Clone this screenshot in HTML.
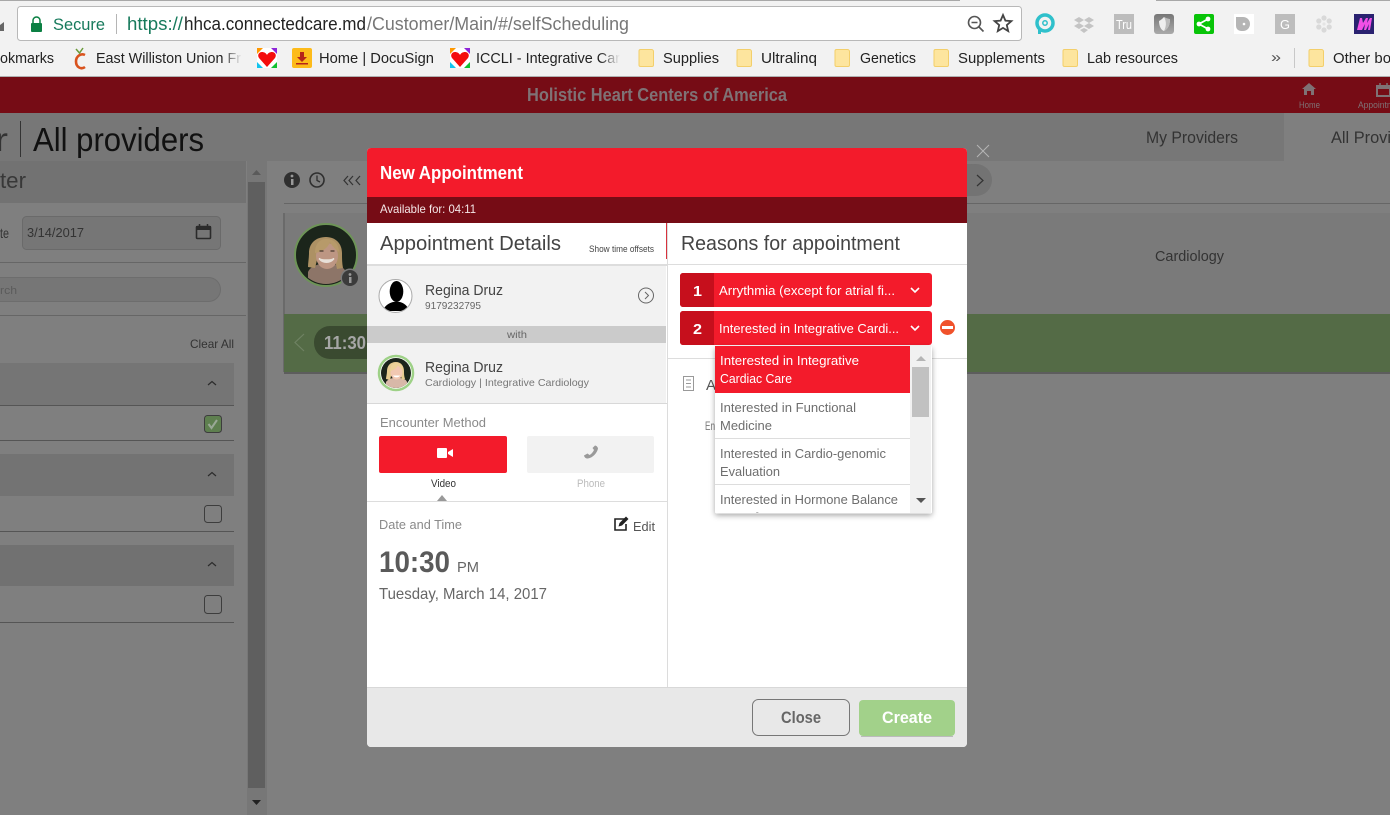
<!DOCTYPE html>
<html><head><meta charset="utf-8"><title>New Appointment</title>
<style>
html,body{margin:0;padding:0;width:1390px;height:815px;overflow:hidden;background:#7f7f7f}
svg{display:block}
text{font-family:"Liberation Sans",sans-serif;white-space:pre}
</style></head><body>
<svg width="1390" height="815" viewBox="0 0 1390 815" xmlns="http://www.w3.org/2000/svg">
<defs>
<filter id="sh" x="-20%" y="-20%" width="140%" height="140%"><feDropShadow dx="0" dy="2" stdDeviation="3" flood-color="#000" flood-opacity=".35"/></filter>
<linearGradient id="f1" x1="0" x2="1"><stop offset="0" stop-color="#f2f2f2" stop-opacity="0"/><stop offset="1" stop-color="#f2f2f2"/></linearGradient>
<linearGradient id="g4" x1="0" x2="0" y1="0" y2="1"><stop offset="0" stop-color="#777"/><stop offset="1" stop-color="#aaa"/></linearGradient>
<clipPath id="pc1"><circle cx="326" cy="255" r="29"/></clipPath>
<clipPath id="pc2"><circle cx="396" cy="373" r="15"/></clipPath>
<clipPath id="pc3"><circle cx="395.500" cy="296" r="16"/></clipPath>
<clipPath id="dd"><rect x="715" y="346" width="196" height="167"/></clipPath>
</defs>

<!-- browser chrome -->
<rect width="1390" height="77" fill="#f2f2f2"/>
<rect x="0" y="0" width="960" height="1" fill="#a8a8a8"/>
<rect x="1156" y="0" width="234" height="1" fill="#a8a8a8"/>
<path d="M0 25l4-3v9H0z" fill="#666"/>
<rect x="17.500" y="6.500" width="1004" height="34" rx="3" fill="#fff" stroke="#b8b8b8"/>
<rect x="31" y="23" width="11" height="9" rx="1" fill="#0b8043"/>
<path d="M33 23v-2.500a3.500 3.500 0 0 1 7 0V23" fill="none" stroke="#0b8043" stroke-width="1.500"/>
<text x="53" y="30" font-size="17" fill="#177a5c" textLength="52" lengthAdjust="spacingAndGlyphs">Secure</text>
<rect x="116" y="14" width="1" height="20" fill="#b5b5b5"/>
<text x="127" y="30" font-size="18" fill="#177a5c" textLength="56" lengthAdjust="spacingAndGlyphs">https://</text>
<text x="184" y="30" font-size="18" fill="#222" textLength="182" lengthAdjust="spacingAndGlyphs">hhca.connectedcare.md</text>
<text x="367" y="30" font-size="18" fill="#777" textLength="262" lengthAdjust="spacingAndGlyphs">/Customer/Main/#/selfScheduling</text>
<!-- zoom + star -->
<circle cx="974.500" cy="22.500" r="6" fill="none" stroke="#555" stroke-width="1.600"/>
<path d="M971.500 22.500h6M979 27l4.500 4.500" stroke="#555" stroke-width="1.600" fill="none"/>
<path d="M1003 15l2.400 5.600 6 .5-4.600 4 1.400 6-5.200-3.200-5.200 3.200 1.400-6-4.600-4 6-.5z" fill="none" stroke="#444" stroke-width="1.800"/>
<!-- extensions -->
<circle cx="1045" cy="23" r="8" fill="none" stroke="#2fc0cb" stroke-width="3.500"/><circle cx="1045" cy="23" r="2.200" fill="none" stroke="#2fc0cb" stroke-width="1.500"/><path d="M1039.500 29v5" stroke="#2fc0cb" stroke-width="3"/>
<path d="M1079 17l5 3-5 3-5-3zM1089 17l5 3-5 3-5-3zM1079 23l5 3-5 3-5-3zM1089 23l5 3-5 3-5-3zM1084 28l4 2-4 3-4-3z" fill="#c4c4c4"/>
<rect x="1114" y="14" width="20" height="20" fill="#bdbdbd"/><text x="1116" y="29" font-size="13" fill="#fff" textLength="16" lengthAdjust="spacingAndGlyphs">Tru</text>
<rect x="1154" y="14" width="20" height="20" rx="3" fill="url(#g4)"/><path d="M1164 17c3 2 5 2 6 2 0 6-2 10-6 12-3-1-5-5-5-10 2-1 3-2 5-4z" fill="#eee"/><path d="M1164 17c3 2 5 2 6 2 0 6-2 10-6 12 2-4 3-9 0-14z" fill="#bbb"/>
<rect x="1194" y="14" width="20" height="20" rx="2" fill="#08c408"/><circle cx="1199" cy="24" r="2.400" fill="#fff"/><circle cx="1208" cy="19" r="2.400" fill="#fff"/><circle cx="1208" cy="29" r="2.400" fill="#fff"/><path d="M1199 24l9-5M1199 24l9 5" stroke="#fff" stroke-width="1.800"/>
<rect x="1234" y="14" width="20" height="20" fill="#fff"/><path d="M1236 17h7a7 7 0 0 1 0 14h-2a5 5 0 0 1-5-5z" fill="#b5b5b5"/><circle cx="1244" cy="24" r="1.300" fill="#fff"/>
<rect x="1275" y="14" width="20" height="20" fill="#bdbdbd"/><text x="1280" y="29" font-size="13" fill="#fff" textLength="10" lengthAdjust="spacingAndGlyphs">G</text>
<g fill="#d9d9d9"><circle cx="1324" cy="18" r="2.600"/><circle cx="1324" cy="30" r="2.600"/><circle cx="1318.800" cy="21" r="2.600"/><circle cx="1329.200" cy="21" r="2.600"/><circle cx="1318.800" cy="27" r="2.600"/><circle cx="1329.200" cy="27" r="2.600"/></g><circle cx="1324" cy="24" r="1.600" fill="#e4e4e4"/>
<rect x="1354" y="14" width="20" height="20" fill="#2a2270"/><path d="M1357 30l3-12h2l1 5 3-5h2l-1 5 3-5h2l-2 12h-2l1-6-3 6h-2l1-6-3 6z" fill="#f24fe6"/>
<!-- bookmarks -->
<g font-size="15" fill="#222">
<text x="0" y="63" textLength="54" lengthAdjust="spacingAndGlyphs">okmarks</text>
<text x="96" y="63" textLength="145" lengthAdjust="spacingAndGlyphs">East Williston Union Fr</text>
<text x="319" y="63" textLength="115" lengthAdjust="spacingAndGlyphs">Home | DocuSign</text>
<text x="476" y="63" textLength="144" lengthAdjust="spacingAndGlyphs">ICCLI - Integrative Car</text>
<text x="663" y="63" textLength="56" lengthAdjust="spacingAndGlyphs">Supplies</text>
<text x="761" y="63" textLength="56" lengthAdjust="spacingAndGlyphs">Ultralinq</text>
<text x="860" y="63" textLength="56" lengthAdjust="spacingAndGlyphs">Genetics</text>
<text x="958" y="63" textLength="87" lengthAdjust="spacingAndGlyphs">Supplements</text>
<text x="1087" y="63" textLength="91" lengthAdjust="spacingAndGlyphs">Lab resources</text>
<text x="1271" y="62" textLength="10" lengthAdjust="spacingAndGlyphs" fill="#555">»</text>
<text x="1333" y="63" textLength="58" lengthAdjust="spacingAndGlyphs">Other bo</text>
</g>
<rect x="222" y="46" width="20" height="26" fill="url(#f1)"/><rect x="600" y="46" width="20" height="26" fill="url(#f1)"/>
<rect x="1294" y="48" width="1" height="20" fill="#c8c8c8"/>
<!-- apple -->
<path d="M85 55c-4-2-9 1-9 6.500s5 8.500 9 5.500" fill="none" stroke="#d9531e" stroke-width="2.600"/><path d="M76 49l3.500 4 3.500-5" fill="none" stroke="#6a9a3a" stroke-width="1.500"/>
<!-- heart icons -->
<g id="hh"><rect x="257" y="48" width="20" height="20" fill="#fff"/><path d="M257 48h6l-6 6z" fill="#ff9800"/><path d="M277 48h-6l6 6z" fill="#8e24d8"/><path d="M257 68h6l-6-6z" fill="#12c4ee"/><path d="M277 68h-6l6-6z" fill="#10c030"/><path d="M267 67l-8-9c-2-3 0-6 3-6 2 0 4 1 5 3 1-2 3-3 5-3 3 0 5 3 3 6z" fill="#f40d0d"/></g>
<use href="#hh" x="193"/>
<rect x="292" y="48" width="20" height="20" rx="2" fill="#fdbb1a"/><path d="M300 52h4v5h3l-5 5-5-5h3z" fill="#b5241a"/><rect x="296" y="63" width="12" height="1.500" fill="#b5241a"/>
<!-- folders -->
<g id="fo"><path d="M640.500 49.500h11a2 2 0 0 1 2 2v13.500a1.500 1.500 0 0 1-1.500 1.500h-11.500a1.500 1.500 0 0 1-1.500-1.500v-14a1.500 1.500 0 0 1 1.500-1.500z" fill="#fde59e" stroke="#f3cf6b"/></g>
<use href="#fo" x="98"/><use href="#fo" x="196"/><use href="#fo" x="295"/><use href="#fo" x="424"/><use href="#fo" x="670"/>
<rect x="0" y="76" width="1390" height="1" fill="#b0b0b0"/>

<!-- app header -->
<rect x="0" y="77" width="1390" height="36" fill="#760c15"/>
<text x="527" y="101" font-size="18" font-weight="bold" fill="#7f7275" textLength="260" lengthAdjust="spacingAndGlyphs">Holistic Heart Centers of America</text>
<path d="M1309 83l7 6h-2v6h-3v-4h-4v4h-3v-6h-2z" fill="#7f7275"/>
<text x="1299" y="108" font-size="9" fill="#7f7275" textLength="21" lengthAdjust="spacingAndGlyphs">Home</text>
<rect x="1377" y="86" width="13" height="10" fill="none" stroke="#7f7275" stroke-width="2"/><rect x="1377" y="85" width="13" height="4" fill="#7f7275"/><path d="M1380 83v3M1387 83v3" stroke="#7f7275" stroke-width="1.500"/>
<text x="1358" y="108" font-size="9" fill="#7f7275" textLength="36" lengthAdjust="spacingAndGlyphs">Appointm</text>

<!-- tabs band -->
<rect x="0" y="113" width="1284" height="48" fill="#777777"/>
<rect x="1284" y="113" width="106" height="48" fill="#7f7f7f"/>
<text x="-5" y="151" font-size="33" fill="#333" textLength="13" lengthAdjust="spacingAndGlyphs">r</text>
<rect x="20" y="121" width="1" height="36" fill="#333"/>
<text x="33" y="151" font-size="33" fill="#111" textLength="171" lengthAdjust="spacingAndGlyphs">All providers</text>
<text x="1146" y="143" font-size="17" fill="#333" textLength="92" lengthAdjust="spacingAndGlyphs">My Providers</text>
<text x="1331" y="143" font-size="17" fill="#333" textLength="60" lengthAdjust="spacingAndGlyphs">All Provi</text>

<!-- sidebar -->
<rect x="0" y="161" width="246" height="42" fill="#727272"/>
<text x="0" y="188" font-size="22" fill="#383838" textLength="26" lengthAdjust="spacingAndGlyphs">ter</text>
<text x="0" y="238" font-size="14" fill="#333" textLength="9" lengthAdjust="spacingAndGlyphs">te</text>
<rect x="22.500" y="216.500" width="198" height="33" rx="4" fill="#767676" stroke="#6a6a6a"/>
<text x="27" y="237" font-size="13" fill="#333" textLength="57" lengthAdjust="spacingAndGlyphs">3/14/2017</text>
<rect x="196.500" y="226.500" width="14" height="12" rx="1" fill="none" stroke="#2b2b2b" stroke-width="1.600"/><rect x="196" y="226" width="15" height="4" fill="#2b2b2b"/><path d="M199.500 224v3M207.500 224v3" stroke="#2b2b2b" stroke-width="1.500"/>
<rect x="0" y="262" width="246" height="1" fill="#666"/>
<rect x="-40.500" y="277.500" width="261" height="24" rx="12" fill="#767676" stroke="#6d6d6d"/>
<text x="0" y="294" font-size="11" fill="#5b5b5b" textLength="17" lengthAdjust="spacingAndGlyphs">rch</text>
<rect x="0" y="315" width="246" height="1" fill="#666"/>
<text x="190" y="348" font-size="12" fill="#333" textLength="44" lengthAdjust="spacingAndGlyphs">Clear All</text>
<rect x="0" y="363" width="234" height="42" fill="#757575"/>
<rect x="0" y="405" width="234" height="1" fill="#555"/>
<rect x="0" y="440" width="234" height="1" fill="#555"/>
<rect x="0" y="454" width="234" height="42" fill="#737373"/>
<rect x="0" y="531" width="234" height="1" fill="#555"/>
<rect x="0" y="545" width="234" height="41" fill="#717171"/>
<rect x="0" y="622" width="234" height="1" fill="#555"/>
<g fill="none" stroke="#2b2b2b" stroke-width="1.200"><path d="M208 385l4-3.500 4 3.500M208 476l4-3.500 4 3.500M208 566l4-3.500 4 3.500"/></g>
<rect x="204.500" y="415.500" width="17" height="17" rx="3" fill="#5e7f4f" stroke="#3d3d3d"/>
<path d="M208.500 424l3 4 5.500-8" fill="none" stroke="#9aa896" stroke-width="2"/>
<rect x="204.500" y="505.500" width="17" height="17" rx="3" fill="none" stroke="#3d3d3d"/>
<rect x="204.500" y="595.500" width="17" height="18" rx="3" fill="none" stroke="#3d3d3d"/>
<!-- sidebar scroll -->
<rect x="247" y="161" width="20" height="654" fill="#777"/>
<rect x="248" y="182" width="17" height="606" fill="#5f5f5f"/>
<path d="M252 175l4.500-5 4.500 5z" fill="#5a5a5a"/>
<path d="M252 800l4.500 5 4.500-5z" fill="#222"/>

<!-- right content -->
<circle cx="292" cy="180" r="8" fill="#2f2f2f"/><rect x="291" y="179" width="2.500" height="6" fill="#999"/><circle cx="292" cy="176" r="1.400" fill="#999"/>
<circle cx="317" cy="180" r="7" fill="none" stroke="#2f2f2f" stroke-width="1.600"/><path d="M317 175.500v5l3 1.500" fill="none" stroke="#2f2f2f" stroke-width="1.300"/>
<path d="M348 176l-4 4.500 4 4.500M353 176l-4 4.500 4 4.500M360 176l-4 4.500 4 4.500" fill="none" stroke="#333" stroke-width="1.200"/>
<rect x="284" y="203" width="1106" height="1" fill="#666"/>
<rect x="900" y="164" width="76" height="32" fill="#737373"/><circle cx="976" cy="180" r="16" fill="#737373"/>
<path d="M977 175l6 5.500-6 5.500" fill="none" stroke="#333" stroke-width="1.200"/>
<rect x="284" y="213" width="1106" height="101" fill="#7a7a7a"/>
<rect x="283" y="213" width="2" height="159" fill="#6a6a6a"/>
<rect x="284" y="314" width="1106" height="58" fill="#546b46"/>
<rect x="284" y="372" width="1106" height="2" fill="#5d5d5d"/>
<text x="1155" y="261" font-size="15" fill="#333" textLength="69" lengthAdjust="spacingAndGlyphs">Cardiology</text>
<path d="M304 334l-9 8.500 9 8.500" fill="none" stroke="#6f8263" stroke-width="1.200"/>
<rect x="314" y="326" width="70" height="33" rx="16" fill="#3a4a30"/>
<text x="324" y="349" font-size="18" font-weight="bold" fill="#a6a6a6" textLength="42" lengthAdjust="spacingAndGlyphs">11:30</text>
<!-- avatar bg -->
<circle cx="326" cy="255" r="31" fill="#1a241a" stroke="#6d9457" stroke-width="2"/>
<g clip-path="url(#pc1)">
<rect x="295" y="225" width="62" height="60" fill="#1b251b"/>
<path d="M308 272c2-5 8-7 12-8h13c5 1 11 3 13 8v14h-38z" fill="#8d7568"/>
<path d="M326 237c-11 0-17 7-17 16 0 5-1 10-1 14l7 1 2-8h18l2 9 6-1c-1-5-1-10-1-15 0-9-6-16-16-16z" fill="#ad9164"/>
<ellipse cx="327" cy="256" rx="11" ry="13" fill="#bd9683"/>
<path d="M315 253c7-1 13-5 15-11 2 4 6 8 9 10 0-7-4-13-13-13-7 0-11 6-11 14z" fill="#b79a6a"/>
<path d="M319 258.500c4 5 11 5 15 0-2 2-13 2-15 0z" fill="#e8e0d8" stroke="#e8e0d8" stroke-width="1.500"/>
<path d="M319.500 251h4M330.500 251h4" stroke="#4a3a30" stroke-width="1.200"/>
</g>
<circle cx="350" cy="278" r="9.500" fill="#7a7a7a"/><circle cx="350" cy="278" r="8" fill="#3b3b3b"/><rect x="349" y="277" width="2.500" height="6" fill="#999"/><circle cx="350" cy="274.500" r="1.400" fill="#999"/>

<!-- modal close -->
<path d="M977 145l12 12M989 145l-12 12" stroke="#b5b5b5" stroke-width="1"/>

<!-- modal -->
<rect x="367" y="148" width="600" height="599" rx="4" fill="#fff"/>
<path d="M367 197v-45a4 4 0 0 1 4-4h592a4 4 0 0 1 4 4v45z" fill="#f31b2b"/>
<rect x="367" y="197" width="600" height="26" fill="#760c15"/>
<text x="380" y="179" font-size="18" font-weight="bold" fill="#fff" textLength="143" lengthAdjust="spacingAndGlyphs">New Appointment</text>
<text x="380" y="213" font-size="12" fill="#f4e6e7" textLength="96" lengthAdjust="spacingAndGlyphs">Available for: 04:11</text>
<text x="380" y="250" font-size="20" fill="#444" textLength="181" lengthAdjust="spacingAndGlyphs">Appointment Details</text>
<text x="589" y="252" font-size="9.500" fill="#444" textLength="65" lengthAdjust="spacingAndGlyphs">Show time offsets</text>
<rect x="666" y="223" width="1" height="36" fill="#d8323d"/>
<rect x="667" y="223" width="1" height="464" fill="#dcdcdc"/>
<rect x="367" y="264" width="300" height="2" fill="#ddd"/>
<rect x="367" y="266" width="299" height="60" fill="#f2f2f2"/>
<circle cx="395.500" cy="296" r="16.500" fill="#fff" stroke="#aaa"/>
<g clip-path="url(#pc3)"><ellipse cx="396.500" cy="291.500" rx="6.800" ry="10.500" fill="#000"/><path d="M383 311c1-5 6-8 10-9h7c4 1 8 4 9 9z" fill="#000"/></g>
<text x="425" y="295" font-size="15" fill="#444" textLength="78" lengthAdjust="spacingAndGlyphs">Regina Druz</text>
<text x="425" y="309" font-size="10.500" fill="#666" textLength="56" lengthAdjust="spacingAndGlyphs">9179232795</text>
<circle cx="646" cy="295.500" r="7.500" fill="none" stroke="#666"/>
<path d="M645 292l3.500 3.500-3.500 3.500" fill="none" stroke="#666"/>
<rect x="367" y="326" width="299" height="17" fill="#cbcbcb"/>
<text x="507" y="338" font-size="10.500" fill="#666" textLength="20" lengthAdjust="spacingAndGlyphs">with</text>
<rect x="367" y="343" width="299" height="60" fill="#f2f2f2"/>
<rect x="367" y="403" width="300" height="1" fill="#d8d8d8"/>
<circle cx="396" cy="373" r="17" fill="#fff" stroke="#9ed187" stroke-width="2.500"/>
<g clip-path="url(#pc2)">
<rect x="380" y="357" width="32" height="32" fill="#1b251b"/>
<path d="M386 382c2-3 6-4 8-4h5c3 0 7 1 8 4v8h-21z" fill="#d8b8a8"/>
<path d="M396 362c-6 0-9 4-9 9 0 3-1 6-1 8l4 1 1-4h10l1 4 3-1c-1-3-1-5-1-8 0-5-3-9-8-9z" fill="#e6cc90"/>
<ellipse cx="396.500" cy="372.500" rx="6" ry="7" fill="#f2c8b2"/>
<path d="M390 371c4-1 7-3 8-6 1 2 3 4 5 5 0-4-2-7-7-7-4 0-6 4-6 8z" fill="#ecd298"/>
<path d="M393 375.500h7c-1 2.500-6 2.500-7 0z" fill="#fff"/>
</g>
<text x="425" y="372" font-size="15" fill="#444" textLength="78" lengthAdjust="spacingAndGlyphs">Regina Druz</text>
<text x="425" y="386" font-size="10.500" fill="#777" textLength="164" lengthAdjust="spacingAndGlyphs">Cardiology | Integrative Cardiology</text>

<text x="380" y="427" font-size="12.500" fill="#8a8a8a" textLength="106" lengthAdjust="spacingAndGlyphs">Encounter Method</text>
<rect x="379" y="436" width="128" height="37" rx="2" fill="#f31b2b"/>
<rect x="437" y="448" width="10" height="10" rx="1" fill="#fff"/><path d="M448 452l5-3v8l-5-3z" fill="#fff"/>
<rect x="527" y="436" width="127" height="37" rx="2" fill="#f2f2f2"/>
<path d="M595 445.500c1.500 0 3 2 3 3-1 5-6 10-11 10-1.500 0-3-2-3-3l3.500-2 2 1.500c2-1 3.500-3 4.500-5l-1.500-2z" fill="#9a9a9a"/>
<text x="431" y="487" font-size="11" fill="#333" textLength="25" lengthAdjust="spacingAndGlyphs">Video</text>
<text x="577" y="487" font-size="11" fill="#bbb" textLength="28" lengthAdjust="spacingAndGlyphs">Phone</text>
<path d="M437 501l5-6 5 6z" fill="#999"/>
<rect x="367" y="501" width="300" height="1" fill="#ddd"/>
<text x="379" y="529" font-size="12.500" fill="#8a8a8a" textLength="83" lengthAdjust="spacingAndGlyphs">Date and Time</text>
<path d="M625 519h-10v11h11v-6" fill="none" stroke="#222" stroke-width="1.600"/><path d="M618.500 526.500l1-3.500 6.500-6.500 2.500 2.500-6.500 6.500z" fill="#222"/>
<text x="633" y="531" font-size="12.500" fill="#555" textLength="22" lengthAdjust="spacingAndGlyphs">Edit</text>
<text x="379" y="572" font-size="30" font-weight="bold" fill="#5a5a5a" textLength="71" lengthAdjust="spacingAndGlyphs">10:30</text>
<text x="457" y="572" font-size="15" fill="#666" textLength="22" lengthAdjust="spacingAndGlyphs">PM</text>
<text x="379" y="599" font-size="16" fill="#666" textLength="168" lengthAdjust="spacingAndGlyphs">Tuesday, March 14, 2017</text>

<!-- right column -->
<text x="681" y="250" font-size="20" fill="#444" textLength="219" lengthAdjust="spacingAndGlyphs">Reasons for appointment</text>
<rect x="668" y="264" width="299" height="1" fill="#ddd"/>
<rect x="680" y="273" width="252" height="34" rx="3" fill="#f31b2b"/>
<path d="M714 273h-31a3 3 0 0 0-3 3v28a3 3 0 0 0 3 3h31z" fill="#c60f1c"/>
<text x="693" y="296" font-size="15" font-weight="bold" fill="#fff" textLength="9" lengthAdjust="spacingAndGlyphs">1</text>
<text x="719" y="295" font-size="12.500" fill="#fff" textLength="176" lengthAdjust="spacingAndGlyphs">Arrythmia (except for atrial fi...</text>
<path d="M911 288l4 4 4-4" fill="none" stroke="#fff" stroke-width="1.600"/>
<rect x="680" y="311" width="252" height="34" rx="3" fill="#f31b2b"/>
<path d="M714 311h-31a3 3 0 0 0-3 3v28a3 3 0 0 0 3 3h31z" fill="#c60f1c"/>
<text x="693" y="334" font-size="15" font-weight="bold" fill="#fff" textLength="9" lengthAdjust="spacingAndGlyphs">2</text>
<text x="719" y="333" font-size="12.500" fill="#fff" textLength="180" lengthAdjust="spacingAndGlyphs">Interested in Integrative Cardi...</text>
<path d="M911 326l4 4 4-4" fill="none" stroke="#fff" stroke-width="1.600"/>
<circle cx="947.500" cy="327.500" r="7.500" fill="#f0522b"/><rect x="942" y="326" width="11" height="3" fill="#fff"/>
<rect x="668" y="358" width="299" height="1" fill="#ddd"/>
<rect x="683.500" y="376.500" width="10" height="14" fill="none" stroke="#999"/><path d="M686 380h5M686 383.500h5M686 387h5" stroke="#999"/>
<text x="706" y="390" font-size="15" fill="#555" textLength="10" lengthAdjust="spacingAndGlyphs">A</text>
<text x="705" y="430" font-size="12" fill="#777" textLength="10" lengthAdjust="spacingAndGlyphs">En</text>

<!-- dropdown -->
<rect x="715" y="346" width="217" height="167.500" rx="2" fill="#fff" filter="url(#sh)"/>
<g clip-path="url(#dd)">
<rect x="715" y="346" width="195" height="47" fill="#f31b2b"/>
<text x="720" y="365" font-size="12.500" fill="#fff" textLength="139" lengthAdjust="spacingAndGlyphs">Interested in Integrative</text>
<text x="720" y="383" font-size="12.500" fill="#fff" textLength="72" lengthAdjust="spacingAndGlyphs">Cardiac Care</text>
<g font-size="12.500" fill="#6e6e6e">
<text x="720" y="412" textLength="136" lengthAdjust="spacingAndGlyphs">Interested in Functional</text>
<text x="720" y="430" textLength="52" lengthAdjust="spacingAndGlyphs">Medicine</text>
<text x="720" y="458" textLength="166" lengthAdjust="spacingAndGlyphs">Interested in Cardio-genomic</text>
<text x="720" y="476" textLength="60" lengthAdjust="spacingAndGlyphs">Evaluation</text>
<text x="720" y="504" textLength="178" lengthAdjust="spacingAndGlyphs">Interested in Hormone Balance</text>
<text x="720" y="522" textLength="40" lengthAdjust="spacingAndGlyphs">and</text>
</g>
<rect x="715" y="438" width="195" height="1" fill="#ddd"/>
<rect x="715" y="484" width="195" height="1" fill="#ddd"/>
</g>
<rect x="910" y="346" width="21" height="167" fill="#f1f1f1"/>
<rect x="912" y="367" width="17" height="50" fill="#c1c1c1"/>
<path d="M916 361l5-5 5 5z" fill="#b5b5b5"/>
<path d="M916 498l5 5 5-5z" fill="#555"/>

<!-- footer -->
<path d="M367 687h600v56a4 4 0 0 1-4 4H371a4 4 0 0 1-4-4z" fill="#e8e8e8"/>
<rect x="367" y="687" width="600" height="1" fill="#d8d8d8"/>
<rect x="752.500" y="699.500" width="97" height="36" rx="6" fill="#e8e8e8" stroke="#777"/>
<text x="781" y="723" font-size="17" font-weight="bold" fill="#666" textLength="40" lengthAdjust="spacingAndGlyphs">Close</text>
<rect x="859" y="700" width="96" height="36" rx="4" fill="#a2d18a"/>
<rect x="861" y="736" width="92" height="1" fill="#bbb"/>
<text x="882" y="723" font-size="17" font-weight="bold" fill="#fff" textLength="50" lengthAdjust="spacingAndGlyphs">Create</text>
</svg>
</body></html>
